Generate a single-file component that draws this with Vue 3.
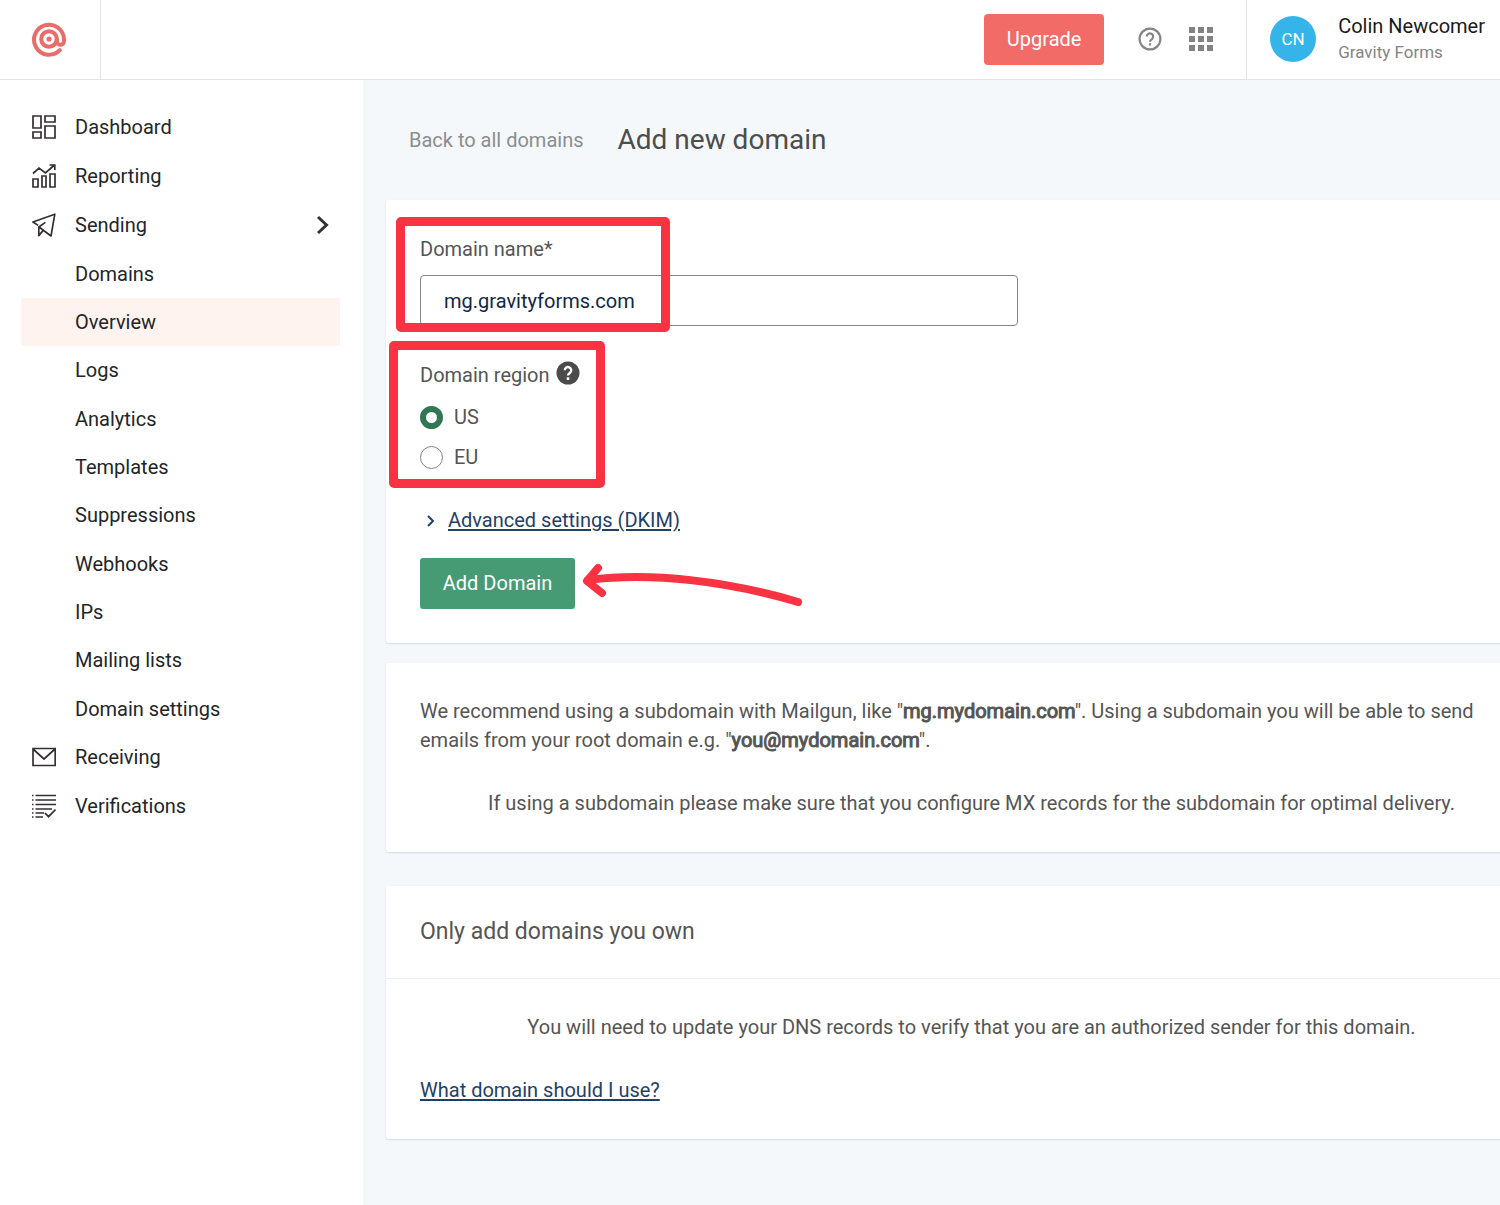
<script setup>
import { ref } from 'vue'

const domain = ref('mg.gravityforms.com')
const region = ref('US')
const subItems = ['Domains', 'Overview', 'Logs', 'Analytics', 'Templates', 'Suppressions', 'Webhooks', 'IPs', 'Mailing lists', 'Domain settings']
</script>

<template>
  <div class="page">
    <header class="topbar">
      <a class="logo" href="#" aria-label="Mailgun">
        <svg width="36" height="36" viewBox="0 0 36 36" fill="none" stroke="#e96b6a" stroke-width="4" stroke-linecap="round">
          <path d="M28.8 29.2A15 15 0 1 1 33 18v2.2a3.6 3.6 0 0 1-7.2 0V18" />
          <circle cx="18" cy="18" r="7.8" />
          <circle cx="18" cy="18" r="2.6" fill="#e96b6a" stroke="none" />
        </svg>
      </a>
      <button class="upgrade" type="button">Upgrade</button>
      <button class="icon-button help" type="button" aria-label="Help">
        <svg width="24" height="24" viewBox="0 0 24 24" fill="none" stroke="#858585" stroke-width="2.2">
          <circle cx="12" cy="12" r="10.4" />
          <path d="M8.8 9.6a3.2 3.2 0 1 1 5.2 2.5c-1.1.8-2 1.3-2 2.7" />
          <path d="M12 16.2v2.3" />
        </svg>
      </button>
      <button class="icon-button apps" type="button" aria-label="Apps">
        <svg width="24" height="24" viewBox="0 0 24 24" fill="#828282">
          <path d="M0 0h6v6H0zM9 0h6v6H9zM18 0h6v6h-6zM0 9h6v6H0zM9 9h6v6H9zM18 9h6v6h-6zM0 18h6v6H0zM9 18h6v6H9zM18 18h6v6h-6z" />
        </svg>
      </button>
      <div class="account">
        <span class="avatar">CN</span>
        <div>
          <div class="user">Colin Newcomer</div>
          <div class="company">Gravity Forms</div>
        </div>
      </div>
    </header>

    <div class="body">
      <nav class="sidebar">
        <a class="item" href="#">
          <svg class="nav-icon" viewBox="0 0 24 24">
            <path d="M1 1h8v12H1zM13 1h10v6H13zM1 17h8v6H1zM13 11h10v12H13z" />
          </svg>
          Dashboard
        </a>
        <a class="item" href="#">
          <svg class="nav-icon" viewBox="0 0 24 24">
            <path d="M1 15h5v8H1zM10 12h4v11h-4zM18 10h5v13h-5zM1 9.5l6-5.5 6.5 5L22.5 1M17.5 1h5.3v5" />
          </svg>
          Reporting
        </a>
        <a class="item" href="#">
          <svg class="nav-icon" viewBox="0 0 24 24" stroke-linejoin="round">
            <path d="M6.2 12.4L.9 9 22.8 1.2 19 23 7.4 14.3M13.4 9.4L6.8 14v8.6l4.2-5" />
          </svg>
          Sending
          <svg class="chevron" width="14" height="20" viewBox="0 0 14 20" fill="none" stroke="#333" stroke-width="3">
            <path d="M2 2l8.5 8L2 18" />
          </svg>
        </a>
        <ul class="sublist">
          <li v-for="name in subItems" :key="name">
            <a class="sub" :class="{ active: name === 'Overview' }" href="#">{{ name }}</a>
          </li>
        </ul>
        <a class="item" href="#">
          <svg class="nav-icon" viewBox="0 0 24 24">
            <path d="M1 3.5h22.2v17H1zM1 4l11 10L23 4" />
          </svg>
          Receiving
        </a>
        <a class="item" href="#">
          <svg class="nav-icon" viewBox="0 0 24 24">
            <path d="M0 1.5h1.5M3.5 1.5H24M0 6h1.5M3.5 6H24M0 10.5h1.5M3.5 10.5H24M0 15h1.5M3.5 15H20M0 19h1.5M3.5 19H12M0 23h1.5M3.5 23H11M13 19l3.5 3.7 7-7.2" />
          </svg>
          Verifications
        </a>
      </nav>

      <main class="content">
        <div class="heading">
          <a class="back" href="#">Back to all domains</a>
          <h1>Add new domain</h1>
        </div>

        <form class="card form" @submit.prevent>
          <div class="field">
            <label class="caption" for="domain">Domain name*</label>
            <input id="domain" v-model="domain" class="text-input" type="text">
            <span class="mark mark-name"></span>
          </div>
          <fieldset class="field region">
            <legend>
              <span>Domain region</span>
              <svg width="24" height="24" viewBox="0 0 24 24" fill="none">
                <circle cx="12" cy="12" r="11.5" fill="#4b4b4b" />
                <path d="M8.8 9.3a3.2 3.2 0 1 1 5.2 2.4c-1.1.8-2 1.3-2 2.8" stroke="#fff" stroke-width="2.4" />
                <path d="M12 16.3v2.6" stroke="#fff" stroke-width="2.6" />
              </svg>
            </legend>
            <label class="option"><input v-model="region" type="radio" name="region" value="US">US</label>
            <label class="option"><input v-model="region" type="radio" name="region" value="EU">EU</label>
            <span class="mark mark-region"></span>
          </fieldset>
          <div class="advanced">
            <svg width="10" height="12" viewBox="0 0 10 12" fill="none" stroke="#1f4168" stroke-width="2">
              <path d="M2 1l5 5-5 5" />
            </svg>
            <a href="#">Advanced settings (DKIM)</a>
          </div>
          <div class="actions">
            <button class="submit" type="submit">Add Domain</button>
            <svg class="arrow" width="222" height="48" viewBox="0 0 222 48" fill="none" stroke="#fa3343" stroke-width="8" stroke-linecap="round" stroke-linejoin="round">
              <path d="M6 21C70 13 145 22 216 43" />
              <path d="M16 9L5 22l15 12" />
            </svg>
          </div>
        </form>

        <section class="card advice">
          <p>We recommend using a subdomain with Mailgun, like "<b>mg.mydomain.com</b>". Using a subdomain you will be able to send emails from your root domain e.g. "<b>you@mydomain.com</b>".</p>
          <p class="centered">If using a subdomain please make sure that you configure MX records for the subdomain for optimal delivery.</p>
        </section>

        <section class="card ownership">
          <h2>Only add domains you own</h2>
          <div class="details">
            <p class="centered">You will need to update your DNS records to verify that you are an authorized sender for this domain.</p>
            <a href="#">What domain should I use?</a>
          </div>
        </section>
      </main>
    </div>
  </div>
</template>

<style>
body { margin: 0; background: #fff; }
</style>

<style scoped>
* { box-sizing: border-box; }
.page {
  display: flex;
  flex-direction: column;
  min-height: 100vh;
  font: 20px/29px Roboto, "Liberation Sans", sans-serif;
  color: #555;
  overflow: hidden;
}
button, input { font: inherit; }
button { cursor: pointer; border: 0; padding: 0; }
p, h1, h2, ul { margin: 0; padding: 0; font-weight: 400; }
a { color: #1f4168; text-underline-offset: 2px; }
svg { flex: none; display: block; }

.topbar {
  display: flex;
  align-items: center;
  height: 80px;
  border-bottom: 1px solid #e4e4e6;
  background: #fff;
}
.logo {
  display: flex;
  align-items: center;
  align-self: stretch;
  width: 101px;
  padding: 0 0 1px 31px;
  border-right: 1px solid #e4e4e6;
}
.upgrade {
  width: 120px;
  height: 51px;
  margin: 0 0 1px auto;
  border-radius: 4px;
  background: #f26b67;
  color: #fff;
}
.icon-button { background: none; margin-bottom: 1px; }
.help { margin-left: 34px; }
.apps { margin-left: 27px; }
.account {
  display: flex;
  align-items: center;
  gap: 22px;
  align-self: stretch;
  margin: 0 15px 0 33px;
  padding: 0 0 1px 23px;
  border-left: 1px solid #e4e4e6;
}
.avatar {
  width: 46px;
  height: 46px;
  border-radius: 50%;
  background: #34b4e9;
  color: #fff;
  font-size: 17px;
  line-height: 46px;
  text-align: center;
}
.user { color: #1a1a1a; line-height: 26px; white-space: nowrap; }
.company { color: #858585; font-size: 17px; line-height: 26px; }

.body { display: flex; flex: 1; }
.sidebar {
  flex: none;
  width: 363px;
  padding: 23px 23px 23px 21px;
}
.sidebar a { color: #222629; text-decoration: none; }
.item {
  display: flex;
  align-items: center;
  height: 49px;
  padding: 0 0 1px 11px;
}
.nav-icon {
  width: 24px;
  height: 24px;
  margin-right: 19px;
  fill: none;
  stroke: #362f31;
  stroke-width: 1.7;
}
.chevron { margin: 0 10px 0 auto; }
.sublist { list-style: none; line-height: 48px; }
.sublist li:nth-child(3n) { line-height: 49px; }
.sub {
  display: block;
  padding-left: 54px;
  border-radius: 2px;
}
.sub.active { background: #fff3ef; }

.content {
  flex: 1;
  min-width: 0;
  padding: 0 0 68px 23px;
  background: #f4f8fb;
}
.heading {
  display: flex;
  align-items: center;
  gap: 34px;
  height: 120px;
  padding-left: 23px;
}
.back { color: #8b8d8f; text-decoration: none; }
h1 { color: #4d4d4d; font-size: 28px; line-height: 34px; }
/* The cards run past the right edge of the viewport. */
.card {
  margin-right: -57px;
  border-radius: 3px;
  background: #fff;
  box-shadow: 0 1px 2px #d3d9e2;
}
.form { padding: 35px 34px 34px; }
.field { position: relative; }
.caption { display: block; }
.text-input {
  display: block;
  width: 598px;
  max-width: 100%;
  height: 51px;
  margin-top: 11px;
  padding: 0 23px;
  border: 1px solid #858585;
  border-radius: 4px;
  background: #fff;
  color: #122747;
}
.region {
  min-width: 0;
  margin: 35px 0 0;
  padding: 0;
  border: 0;
}
legend {
  display: flex;
  gap: 6px;
  float: left;
  width: 100%;
  padding: 0 0 2px;
}
.option {
  display: flex;
  clear: both;
  align-items: center;
  gap: 11px;
  width: 150px;
  height: 29px;
}
legend + .option { padding-top: 11px; height: 40px; }
.option + .option { margin-top: 11px; }
.option input {
  appearance: none;
  width: 23px;
  height: 23px;
  margin: 0;
  border: 1px solid #858585;
  border-radius: 50%;
  background: #fff;
}
.option input:checked { border: 6px solid #317655; }
.mark {
  position: absolute;
  border: 9px solid #fa3343;
  border-radius: 5px;
  pointer-events: none;
}
.mark-name { left: -24px; top: -18px; width: 274px; height: 115px; }
.mark-region { left: -31px; top: -20px; width: 216px; height: 147px; }
.advanced { display: flex; align-items: center; gap: 12px; margin-top: 34px; padding-left: 6px; }
.actions { position: relative; margin-top: 23px; }
.submit {
  display: block;
  width: 155px;
  height: 51px;
  border-radius: 3px;
  background: #469b74;
  color: #fff;
}
.arrow { position: absolute; left: 162px; top: 1px; }

.advice { margin-top: 20px; padding: 34px; }
.advice b { font-weight: 400; -webkit-text-stroke: 1px; }
.centered { text-align: center; }
.advice .centered { margin-top: 34px; }
.ownership { margin-top: 34px; }
h2 {
  padding: 29px 34px;
  border-bottom: 1px solid #edf0f3;
  color: #555;
  font-size: 23px;
  line-height: 34px;
}
.details { padding: 34px; }
.details a { display: inline-block; margin-top: 34px; }
</style>
